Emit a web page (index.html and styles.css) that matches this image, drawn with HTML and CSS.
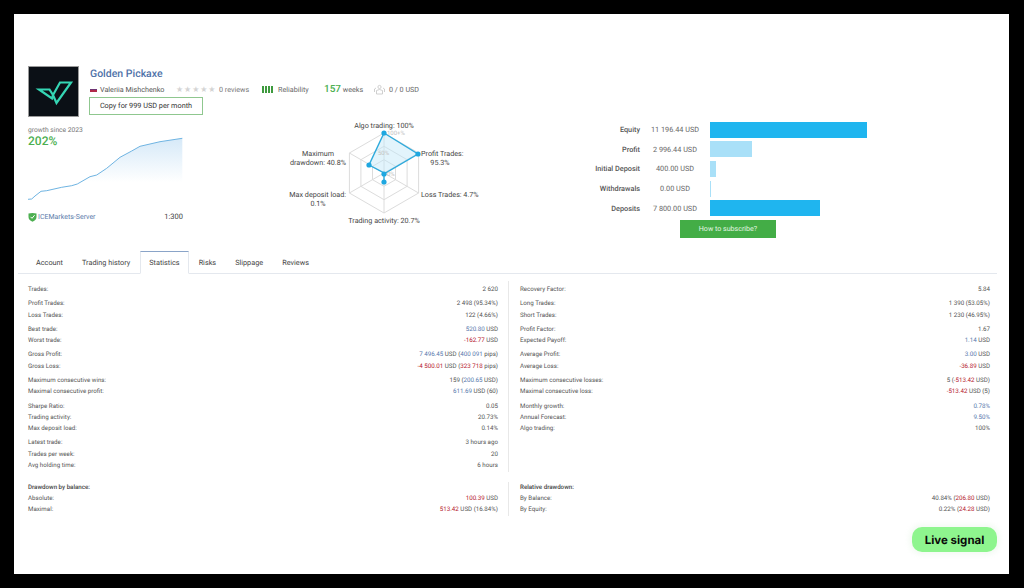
FILE: index.html
```html
<!DOCTYPE html>
<html>
<head>
	<title>Golden Pickaxe</title>
	<meta charset="utf-8">
	<link rel="stylesheet" href="styles.css">
</head>
<body>
<div class="screen">

	<div class="top">
		<div class="left-col">
			<div class="profile">
				<div class="logo">
					<svg width="50" height="50" viewBox="0 0 50 50"><path d="M31 15.5 H42 L27.5 36 L24 28 Z M10 22.5 H20.5 L24 28 L23 31.5 Z" fill="none" stroke="#35d6b4" stroke-width="2.2" stroke-linejoin="miter"/></svg>
				</div>
				<div class="info">
					<div class="name">Golden Pickaxe</div>
					<div class="meta">
						<span class="author"><span class="flag"></span>Valeriia Mishchenko</span>
						<span class="stars">★★★★★</span><span class="reviews">0 reviews</span>
						<span class="rel"><span class="rel-bars"><i></i><i></i><i></i><i></i></span>Reliability</span>
						<span class="weeks"><b>157</b> weeks</span>
						<span class="subs">
							<svg width="11" height="11" viewBox="0 0 11 11"><circle cx="5.5" cy="3" r="1.6" fill="none" stroke="#c4c4c4" stroke-width=".8"/><path d="M2.5 10 V6.5 Q5.5 4.5 8.5 6.5 V10 Z M.5 8 V5 L2 4 M10.5 8 V5 L9 4" fill="none" stroke="#c4c4c4" stroke-width=".8"/></svg>
							0 / 0 USD
						</span>
					</div>
					<div class="copy-btn">Copy for 999 USD per month</div>
				</div>
			</div>
			<div class="growth">
				<div class="growth-label">growth since 2023</div>
				<div class="growth-val">202%</div>
				<svg class="growth-chart" width="155" height="68" viewBox="0 0 155 68">
					<defs><linearGradient id="fade" x1="0" y1="0" x2="0" y2="1"><stop offset="0" stop-color="#d6e9f8"/><stop offset=".7" stop-color="#ffffff"/></linearGradient></defs>
					<path d="M0 66.3 L3.7 66 L7 63 L13 58.3 L18.7 57.7 L33.7 54.3 L43.7 52.7 L49.3 51 L62 43.7 L68.7 42 L78.7 35.3 L92 24.3 L103.7 18 L112 13.3 L132 8.7 L154.3 5.3 V68 H0 Z" fill="url(#fade)"/>
					<path d="M0 66.3 L3.7 66 L7 63 L13 58.3 L18.7 57.7 L33.7 54.3 L43.7 52.7 L49.3 51 L62 43.7 L68.7 42 L78.7 35.3 L92 24.3 L103.7 18 L112 13.3 L132 8.7 L154.3 5.3" fill="none" stroke="#6fb4e2" stroke-width="1"/>
				</svg>
				<div class="server">
					<span class="server-name">
						<svg width="9" height="10" viewBox="0 0 9 10"><path d="M.5 1.5 Q4.5 .3 8.5 1.5 V5 Q8.5 8 4.5 9.7 Q.5 8 .5 5 Z" fill="#4caf50"/><path d="M2.5 4.8 L4 6.3 L6.6 3.2" fill="none" stroke="#fff" stroke-width="1"/></svg>
						ICEMarkets-Server
					</span>
					<span class="leverage">1:300</span>
				</div>
			</div>
		</div>

		<svg class="radar" width="240" height="118" viewBox="0 0 240 118">
			<g fill="none" stroke="#dcdcdc" stroke-width="1">
				<path d="M114 13 L148.6 33 V73 L114 93 L79.4 73 V33 Z"/>
				<path d="M114 26.3 L137.1 39.7 V66.3 L114 79.7 L90.9 66.3 V39.7 Z"/>
				<path d="M114 39.7 L125.5 46.3 V59.7 L114 66.3 L102.5 59.7 V46.3 Z"/>
				<path d="M114 13 V93 M79.4 33 L148.6 73 M79.4 73 L148.6 33"/>
			</g>
			<path d="M114 13 L148 34 L114 54 L114 62 L114 53 L99 45 Z" fill="#bfe6f8" fill-opacity=".45" stroke="#2eaadc" stroke-width="1.4"/>
			<g fill="#1ea7e0">
				<circle cx="114" cy="13" r="2.6"/><circle cx="148" cy="34" r="2.6"/><circle cx="114" cy="54" r="2.6"/>
				<circle cx="114" cy="62" r="2.6"/><circle cx="99" cy="45" r="2.6"/>
			</g>
			<g class="radar-tick">
				<text x="117" y="15">100+%</text><text x="108" y="35">50%</text><text x="117" y="56">0%</text>
			</g>
			<g class="radar-label">
				<text x="114" y="8" text-anchor="middle">Algo trading: 100%</text>
				<text x="151" y="36">Profit Trades:</text><text x="170" y="45" text-anchor="middle">95.3%</text>
				<text x="151" y="77">Loss Trades: 4.7%</text>
				<text x="114" y="103" text-anchor="middle">Trading activity: 20.7%</text>
				<text x="76" y="77" text-anchor="end">Max deposit load:</text><text x="48" y="86" text-anchor="middle">0.1%</text>
				<text x="48" y="36" text-anchor="middle">Maximum</text><text x="76" y="45" text-anchor="end">drawdown: 40.8%</text>
			</g>
		</svg>

		<div class="money">
			<div class="money-row"><span class="m-label">Equity</span><span class="m-val">11 196.44 USD</span><span class="bar dark" style="width:157px"></span></div>
			<div class="money-row"><span class="m-label">Profit</span><span class="m-val">2 996.44 USD</span><span class="bar" style="width:42px"></span></div>
			<div class="money-row"><span class="m-label">Initial Deposit</span><span class="m-val">400.00 USD</span><span class="bar" style="width:6px"></span></div>
			<div class="money-row"><span class="m-label">Withdrawals</span><span class="m-val">0.00 USD</span><span class="bar" style="width:1px"></span></div>
			<div class="money-row"><span class="m-label">Deposits</span><span class="m-val">7 800.00 USD</span><span class="bar dark" style="width:110px"></span></div>
			<div class="subscribe">How to subscribe?</div>
		</div>
	</div>

	<div class="tabs">
		<span class="tab">Account</span>
		<span class="tab">Trading history</span>
		<span class="tab active">Statistics</span>
		<span class="tab">Risks</span>
		<span class="tab">Slippage</span>
		<span class="tab">Reviews</span>
	</div>

	<div class="stats">
		<div class="col">
			<div class="grp"><div class="row"><span>Trades:</span><span>2 620</span></div></div>
			<div class="grp">
				<div class="row"><span>Profit Trades:</span><span>2 498 (95.34%)</span></div>
				<div class="row"><span>Loss Trades:</span><span>122 (4.66%)</span></div>
			</div>
			<div class="grp">
				<div class="row"><span>Best trade:</span><span><em class="pos">520.80</em> USD</span></div>
				<div class="row"><span>Worst trade:</span><span><em class="neg">-162.77</em> USD</span></div>
			</div>
			<div class="grp">
				<div class="row"><span>Gross Profit:</span><span><em class="pos">7 496.45</em> USD (<em class="pos">400 091</em> pips)</span></div>
				<div class="row"><span>Gross Loss:</span><span><em class="neg">-4 500.01</em> USD (<em class="neg">323 718</em> pips)</span></div>
			</div>
			<div class="grp">
				<div class="row"><span>Maximum consecutive wins:</span><span>159 (<em class="pos">200.65</em> USD)</span></div>
				<div class="row"><span>Maximal consecutive profit:</span><span><em class="pos">611.69</em> USD (60)</span></div>
			</div>
			<div class="grp">
				<div class="row"><span>Sharpe Ratio:</span><span>0.05</span></div>
				<div class="row"><span>Trading activity:</span><span>20.73%</span></div>
				<div class="row"><span>Max deposit load:</span><span>0.14%</span></div>
			</div>
			<div class="grp">
				<div class="row"><span>Latest trade:</span><span>3 hours ago</span></div>
				<div class="row"><span>Trades per week:</span><span>20</span></div>
				<div class="row"><span>Avg holding time:</span><span>6 hours</span></div>
			</div>
		</div>
		<div class="col right">
			<div class="grp"><div class="row"><span>Recovery Factor:</span><span>5.84</span></div></div>
			<div class="grp">
				<div class="row"><span>Long Trades:</span><span>1 390 (53.05%)</span></div>
				<div class="row"><span>Short Trades:</span><span>1 230 (46.95%)</span></div>
			</div>
			<div class="grp">
				<div class="row"><span>Profit Factor:</span><span>1.67</span></div>
				<div class="row"><span>Expected Payoff:</span><span><em class="pos">1.14</em> USD</span></div>
			</div>
			<div class="grp">
				<div class="row"><span>Average Profit:</span><span><em class="pos">3.00</em> USD</span></div>
				<div class="row"><span>Average Loss:</span><span><em class="neg">-36.89</em> USD</span></div>
			</div>
			<div class="grp">
				<div class="row"><span>Maximum consecutive losses:</span><span>5 (<em class="neg">-513.42</em> USD)</span></div>
				<div class="row"><span>Maximal consecutive loss:</span><span><em class="neg">-513.42</em> USD (5)</span></div>
			</div>
			<div class="grp">
				<div class="row"><span>Monthly growth:</span><span><em class="pos">0.78%</em></span></div>
				<div class="row"><span>Annual Forecast:</span><span><em class="pos">9.50%</em></span></div>
				<div class="row"><span>Algo trading:</span><span>100%</span></div>
			</div>
		</div>
	</div>

	<div class="stats drawdown">
		<div class="col">
			<div class="row head"><span>Drawdown by balance:</span></div>
			<div class="row"><span>Absolute:</span><span><em class="neg">100.39</em> USD</span></div>
			<div class="row"><span>Maximal:</span><span><em class="neg">513.42</em> USD (16.84%)</span></div>
		</div>
		<div class="col right">
			<div class="row head"><span>Relative drawdown:</span></div>
			<div class="row"><span>By Balance:</span><span>40.84% (<em class="neg">206.80</em> USD)</span></div>
			<div class="row"><span>By Equity:</span><span>0.22% (<em class="neg">24.28</em> USD)</span></div>
		</div>
	</div>

	<div class="live">Live signal</div>
</div>
</body>
</html>
```

FILE: styles.css
```css
*, *:before, *:after { box-sizing:border-box; }

html, body { margin:0; height:100%; background-color:#000; }

body { padding:14px 15px 14px 14px; font-family:Roboto, "Noto Sans", sans-serif; color:#555; text-rendering:geometricPrecision; }

.screen { position:relative; width:995px; height:560px; background-color:#fff; padding-top:52px; overflow:hidden; }

/* top block */
.top { display:flex; height:185px; padding-left:14px; }
.left-col { width:245px; flex:none; }

.profile { display:flex; gap:10px; height:52px; }
.logo { width:51px; height:51px; flex:none; background-color:#0b1016; border:1px solid #9a9a9a; }
.logo svg { display:block; }
.info { padding-top:1px; }
.name { font-size:10.5px; font-weight:500; line-height:14px; padding-left:1px; color:#4f72a8; }
.meta { display:flex; align-items:center; height:14px; margin-top:1px; font-size:7.2px; white-space:nowrap; width:340px; }
.author { display:flex; align-items:center; width:87px; padding-left:1px; }
.flag { width:7px; height:5px; margin-right:3px; background:linear-gradient(#fff 33%, #2a3f9e 33%, #b02a4a 66%); }
.stars { width:43px; color:#d4d4d4; font-size:8px; letter-spacing:.9px; }
.reviews { width:43px; color:#777; }
.rel { display:flex; align-items:center; width:62px; color:#666; }
.rel-bars { display:flex; gap:1px; margin-right:5px; }
.rel-bars i { width:2px; height:7px; background-color:#3e9a3e; }
.weeks { width:50px; color:#666; }
.weeks b { font-size:10px; font-weight:500; color:#4caf50; }
.subs { display:flex; align-items:center; gap:4px; color:#666; }
.copy-btn { width:114px; height:18px; margin-top:1px; line-height:16px; text-align:center; font-size:7.3px; color:#333; border:1px solid #8fc78f; }

.growth { width:155px; margin-top:7px; position:relative; }
.growth-label { font-size:6.7px; line-height:10px; color:#777; }
.growth-val { font-size:12px; font-weight:500; line-height:13px; color:#4caf50; }
.growth-chart { display:block; margin-top:-15px; }
.server { display:flex; justify-content:space-between; align-items:center; margin-top:11px; font-size:7px; line-height:10px; }
.server-name { display:flex; align-items:center; gap:1px; color:#5a7cab; }
.leverage { color:#444; font-size:7.5px; }

.radar { flex:none; margin-left:-3px; margin-top:54px; }
.radar-label text { font-size:7.2px; fill:#444; }
.radar-tick text { font-size:6px; fill:#c2c2c2; }

.money { width:280px; flex:none; margin-left:80px; margin-top:54px; }
.money-row { display:flex; align-items:center; height:19.6px; font-size:7.3px; }
.m-label { width:50px; flex:none; text-align:right; font-weight:500; color:#555; white-space:nowrap; }
.m-val { width:70px; flex:none; text-align:center; color:#666; white-space:nowrap; }
.bar { display:block; height:16px; background-color:#a9e0f8; }
.bar.dark { background-color:#1fb5ef; }
.subscribe { width:96px; height:18px; margin:2px 0 0 90px; line-height:18px; text-align:center; font-size:7.1px; color:#e4f6e4; background-color:#43ad46; }

/* tabs */
.tabs { display:flex; height:23px; margin:0 12px 0 4px; padding-left:9px; border-bottom:1px solid #e4e8ee; }
.tab { padding:0 9px; margin-right:1px; line-height:24px; font-size:7.3px; color:#444; white-space:nowrap; }
.tab.active { height:23px; padding:0 8px; background-color:#fff; border:1px solid #e4e8ee; border-top:1px solid #8aa4c8; border-bottom-color:#fff; line-height:22px; }

/* stats */
.stats { display:grid; grid-template-columns:470px 482px; column-gap:10px; margin:7px 0 0 14px; font-size:6.2px; color:#555; }
.col { padding-top:3px; }
.col.right { border-left:1px solid #e8e8e8; padding-left:11px; }
.grp { margin-bottom:2.8px; }
.grp:last-child { margin-bottom:0; }
.row { display:flex; justify-content:space-between; height:11.4px; line-height:11.4px; white-space:nowrap; }
.row.head { font-weight:500; color:#444; }
em { font-style:normal; }
.pos { color:#5878ad; }
.neg { color:#b5202e; }
.drawdown { margin-top:10px; }
.drawdown .col { padding-top:0; }

.live { position:absolute; left:898px; top:513px; width:85px; height:25px; line-height:26px; text-align:center; font-family:Inter, sans-serif; font-size:11.5px; font-weight:700; color:#0a0a0a; background-color:#8ef58e; border-radius:10px; box-shadow:0 0 5px 3px rgba(200,230,200,.2); }
```
